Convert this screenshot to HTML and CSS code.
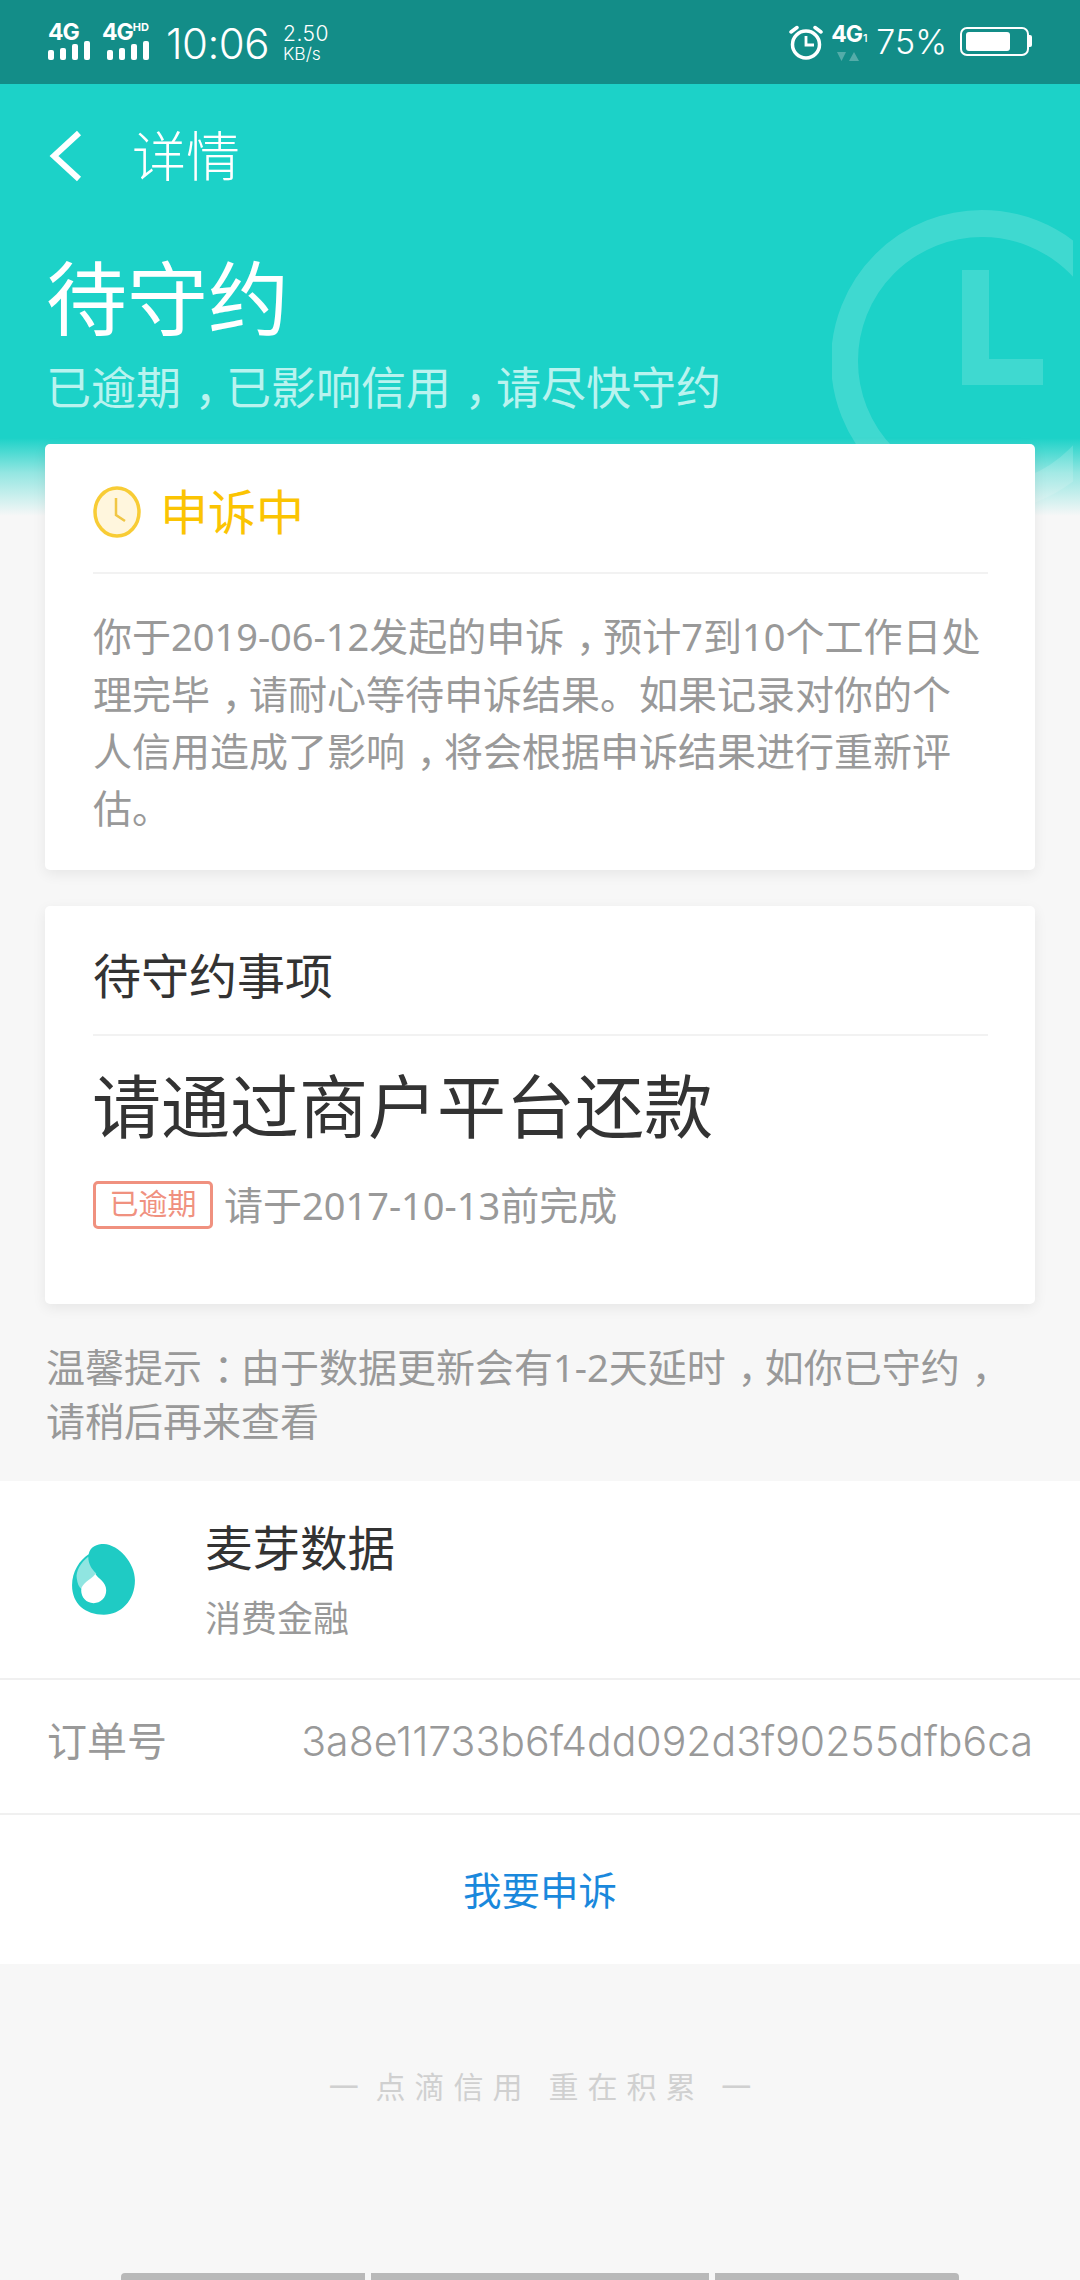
FILE: index.html
```html
<!DOCTYPE html>
<html lang="zh-CN">
<head>
<meta charset="utf-8">
<title>详情</title>
<link rel="stylesheet" href="styles.css">
</head>
<body>
<div class="status">
  <div class="sig">
    <div class="net">4G</div>
    <div class="bars"><i class="b1"></i><i class="b2"></i><i class="b3"></i><i class="b4"></i></div>
  </div>
  <div class="sig sig2">
    <div class="net">4G<sup>HD</sup></div>
    <div class="bars"><i class="b1"></i><i class="b2"></i><i class="b3"></i><i class="b4"></i></div>
  </div>
  <div class="time">10:06</div>
  <div class="speed"><div class="sp1">2.50</div><div class="sp2">KB/s</div></div>
  <div class="status-right">
    <svg class="alarm" viewBox="0 0 34 36" width="34" height="36"><circle cx="17" cy="20.500" r="13.500" fill="none" stroke="#fff" stroke-width="3.500"/><path d="M17 12v9h8" fill="none" stroke="#fff" stroke-width="2.800"/><path d="M2 8l6-4.500M32 8l-6-4.500" stroke="#fff" stroke-width="3.500" stroke-linecap="round"/></svg>
    <div class="sim">
      <div class="net net3">4G<small>1</small></div>
      <svg class="arrows" viewBox="0 0 24 11" width="24" height="11"><path d="M1 1h9l-4.500 9zM13 10h10l-5-9z" fill="#fff" fill-opacity=".28"/></svg>
    </div>
    <div class="pct">75%</div>
    <div class="battery"><div class="fill"></div></div>
    <div class="nub"></div>
  </div>
</div>

<header class="hero">
  <svg class="mark" viewBox="0 0 241 296" width="241" height="296"><circle cx="150" cy="151" r="137.500" fill="none" stroke="#fff" stroke-opacity=".155" stroke-width="27"/><path d="M130 60h27v89h54v26h-81z" fill="#fff" fill-opacity=".155"/></svg>
  <nav class="nav">
    <svg class="back" viewBox="0 0 34 52" width="34" height="52"><path d="M31 3L6 26l25 23" fill="none" stroke="#fff" stroke-width="6"/></svg>
    <span class="nav-title">详情</span>
  </nav>
  <h1 class="title">待守约</h1>
  <p class="sub">已逾期<span class="p">，</span>已影响信用<span class="p">，</span>请尽快守约</p>
</header>

<main class="content">
  <section class="card card1">
    <div class="card-head">
      <svg class="clock" viewBox="0 0 48 52" width="48" height="52"><ellipse cx="24" cy="26" rx="22" ry="24" fill="#fff6dd" stroke="#f8cc35" stroke-width="3.500"/><path d="M23 12v17l9 6" fill="none" stroke="#f0c644" stroke-width="2.500"/></svg>
      <span class="state">申诉中</span>
    </div>
    <p class="body">你于<span class="n">2019-06-12</span>发起的申诉<span class="p">，</span>预计<span class="n">7</span>到<span class="n">10</span>个工作日处理完毕<span class="p">，</span>请耐心等待申诉结果。如果记录对你的个人信用造成了影响<span class="p">，</span>将会根据申诉结果进行重新评估。</p>
  </section>

  <section class="card card2">
    <div class="card-head2">待守约事项</div>
    <div class="big">请通过商户平台还款</div>
    <div class="due"><span class="badge">已逾期</span><span class="due-text">请于<span class="n">2017-10-13</span>前完成</span></div>
  </section>

  <p class="tip">温馨提示<span class="p">：</span>由于数据更新会有<span class="n">1-2</span>天延时<span class="p">，</span>如你已守约<span class="p">，</span>请稍后再来查看</p>
</main>

<section class="panel">
  <div class="row merchant">
    <svg class="logo" viewBox="36 38 186 210" width="63" height="71">
      <path d="M85 68C90 45 110 38 130 38C175 40 222 95 222 145C222 205 180 247 130 247C75 247 36 215 36 160C36 120 58 85 85 68Z" fill="#1fcbc4"/>
      <path d="M84 76C62 92 46 120 50 140C52 155 56 165 64 172L108 125C95 115 84 98 84 76Z" fill="#90e5e1"/>
      <path d="M105 127C112 140 137 150 137 175C137 198 120 213 100 213C78 213 63 196 63 175C63 155 90 145 105 127Z" fill="#fff"/>
    </svg>
    <div class="merchant-text">
      <div class="m-name">麦芽数据</div>
      <div class="m-type">消费金融</div>
    </div>
  </div>
  <div class="row order">
    <span class="o-label">订单号</span>
    <span class="o-value">3a8e11733b6f4dd092d3f90255dfb6ca</span>
  </div>
  <div class="appeal">我要申诉</div>
</section>

<footer class="slogan"><span class="dash">一</span> 点滴信用 重在积累 一</footer>

<div class="gesture"><i class="g1"></i><i class="g2"></i><i class="g3"></i></div>
</body>
</html>
```

FILE: styles.css
```css
* { box-sizing: border-box; }
html, body { margin: 0; padding: 0; }
body {
  width: 1080px;
  height: 2280px;
  overflow: hidden;
  background: #f7f7f7;
  font-family: "Noto Sans", "Noto Sans CJK SC", sans-serif;
  color: #333;
  display: flex;
  flex-direction: column;
}
p, h1 { margin: 0; }
.p { font-feature-settings: "halt"; margin: 0 .2em 0 .3em; }
.n { font-size: .974em; }

/* status bar */
.status {
  height: 84px;
  flex: none;
  background: #138d88;
  color: #fff;
  display: flex;
  align-items: flex-start;
  padding-left: 48px;
  font-family: Inter, "Liberation Sans", sans-serif;
}
.sig { width: 42px; margin-top: 23px; }
.sig2 { margin-left: 12px; width: 52px; }
.net { font-weight: 700; font-size: 23px; line-height: 18px; letter-spacing: -1px; white-space: nowrap; }
.net sup { font-size: 11px; line-height: 8px; vertical-align: 9px; letter-spacing: 0; }
.bars { display: flex; gap: 6px; align-items: flex-end; height: 19px; }
.sig2 .bars { margin-left: 5px; }
.bars i { display: block; width: 6px; background: #fff; border-radius: 2px; }
.bars .b1 { height: 10px; }
.bars .b2 { height: 12px; }
.bars .b3 { height: 16px; }
.bars .b4 { height: 19px; }
.time { font-size: 42px; line-height: 40px; margin-top: 24px; margin-left: 12px; letter-spacing: -.5px; font-weight: 300; }
.speed { margin-left: 14px; margin-top: 24px; }
.sp1 { font-size: 21px; line-height: 20px; font-weight: 300; letter-spacing: .5px; }
.sp2 { font-size: 17.500px; line-height: 20px; font-weight: 300; }
.status-right { margin-left: auto; margin-right: 48px; display: flex; align-items: flex-start; }
.alarm { margin-top: 24px; }
.sim { margin-left: 8px; margin-top: 25px; width: 34px; }
.net3 { line-height: 18px; }
.net3 small { font-size: 11px; font-weight: 500; letter-spacing: 0; margin-left: 1px; }
.arrows { display: block; margin: 4px 0 0 5px; }
.pct { margin-left: 11px; font-size: 34px; line-height: 36px; margin-top: 24px; font-weight: 300; }
.battery { margin-left: 13px; margin-top: 27px; width: 69px; height: 29px; border: 2px solid #fff; border-radius: 7px; padding: 3px 4px; }
.fill { width: 44px; height: 19px; background: #fff; border-radius: 3px; }
.nub { width: 3px; height: 12px; background: #fff; margin-top: 35px; border-radius: 0 2px 2px 0; }

/* hero */
.hero {
  height: 432px;
  flex: none;
  position: relative;
  overflow: hidden;
  background: #1cd2c8;
  color: #fff;
  padding: 0 48px;
}
.hero::after {
  content: "";
  position: absolute;
  left: 0;
  right: 0;
  bottom: 0;
  height: 78px;
  background: linear-gradient(rgba(247,247,247,0), rgba(247,247,247,.55) 45%, #f7f7f7);
}
.mark { position: absolute; left: 832px; top: 126px; }
.nav { height: 102px; padding-top: 42px; display: flex; align-items: center; position: relative; }
.back { margin-right: 50px; }
.nav-title { font-size: 54px; line-height: 60px; font-weight: 300; }
.title { font-size: 81px; line-height: 100px; font-weight: 400; margin: 62px 0 0 -2px; position: relative; }
.sub { font-size: 45px; line-height: 56px; color: #b9f3ef; margin: 12px 0 0 -2px; position: relative; }

/* cards */
.content { margin-top: -72px; position: relative; padding: 0 45px; flex: none; }
.card {
  background: #fff;
  border-radius: 5px;
  box-shadow: 0 4px 14px rgba(0,0,0,.07);
  padding: 0 47px 0 48px;
}
.card1 { height: 426px; }
.card2 { height: 398px; margin-top: 36px; }
.card-head { height: 130px; padding-top: 7px; border-bottom: 2px solid #f2f2f2; display: flex; align-items: center; }
.clock { margin-right: 19px; }
.state { font-size: 48px; line-height: 60px; color: #fbc402; }
.body { margin-top: 33px; font-size: 39px; line-height: 57px; color: #999; }
.card-head2 { height: 130px; border-bottom: 2px solid #f2f2f2; font-size: 48px; line-height: 60px; padding-top: 40px; color: #333; }
.big { font-size: 69px; line-height: 90px; margin-top: 25px; margin-left: -1px; color: #333; }
.due { display: flex; align-items: center; margin-top: 27px; }
.badge {
  width: 120px;
  height: 48px;
  border: 3px solid #f0917f;
  border-radius: 5px;
  color: #f0917f;
  font-size: 29px;
  line-height: 40px;
  text-align: center;
  flex: none;
}
.due-text { font-size: 39px; line-height: 54px; color: #999; margin-left: 11px; }
.tip { margin: 36px 0 0 1px; font-size: 39px; line-height: 54px; color: #999; width: 970px; }

/* panel */
.panel { margin-top: 33px; background: #fff; flex: none; }
.row { display: flex; align-items: center; border-bottom: 2px solid #f0f0f0; }
.merchant { height: 199px; padding-left: 72px; }
.logo { flex: none; margin-right: 70px; }
.m-name { font-size: 47.500px; line-height: 60px; color: #333; margin-top: 2px; }
.m-type { font-size: 36px; line-height: 50px; color: #999; margin-top: 16px; }
.order { height: 135px; padding: 0 47px 12px; justify-content: space-between; }
.o-label { font-size: 40px; line-height: 50px; color: #999; }
.o-value { font-family: Inter, "Liberation Sans", sans-serif; font-weight: 300; font-size: 41px; color: #999; }
.appeal { height: 149px; text-align: center; font-size: 38.500px; line-height: 151px; color: #1a88dc; }

/* footer */
.slogan { margin-top: 98px; padding-left: 9px; text-align: center; font-size: 30px; line-height: 50px; letter-spacing: 9px; color: #d0d0d0; flex: none; }
.dash { margin-right: -9px; }
.gesture { margin-top: auto; height: 7px; display: flex; gap: 6px; padding: 0 121px; flex: none; }
.gesture i { display: block; background: #b9b9b9; height: 7px; }
.g1 { width: 244px; border-radius: 4px 0 0 0; }
.g2 { width: 338px; }
.g3 { width: 244px; border-radius: 0 4px 0 0; }
```
